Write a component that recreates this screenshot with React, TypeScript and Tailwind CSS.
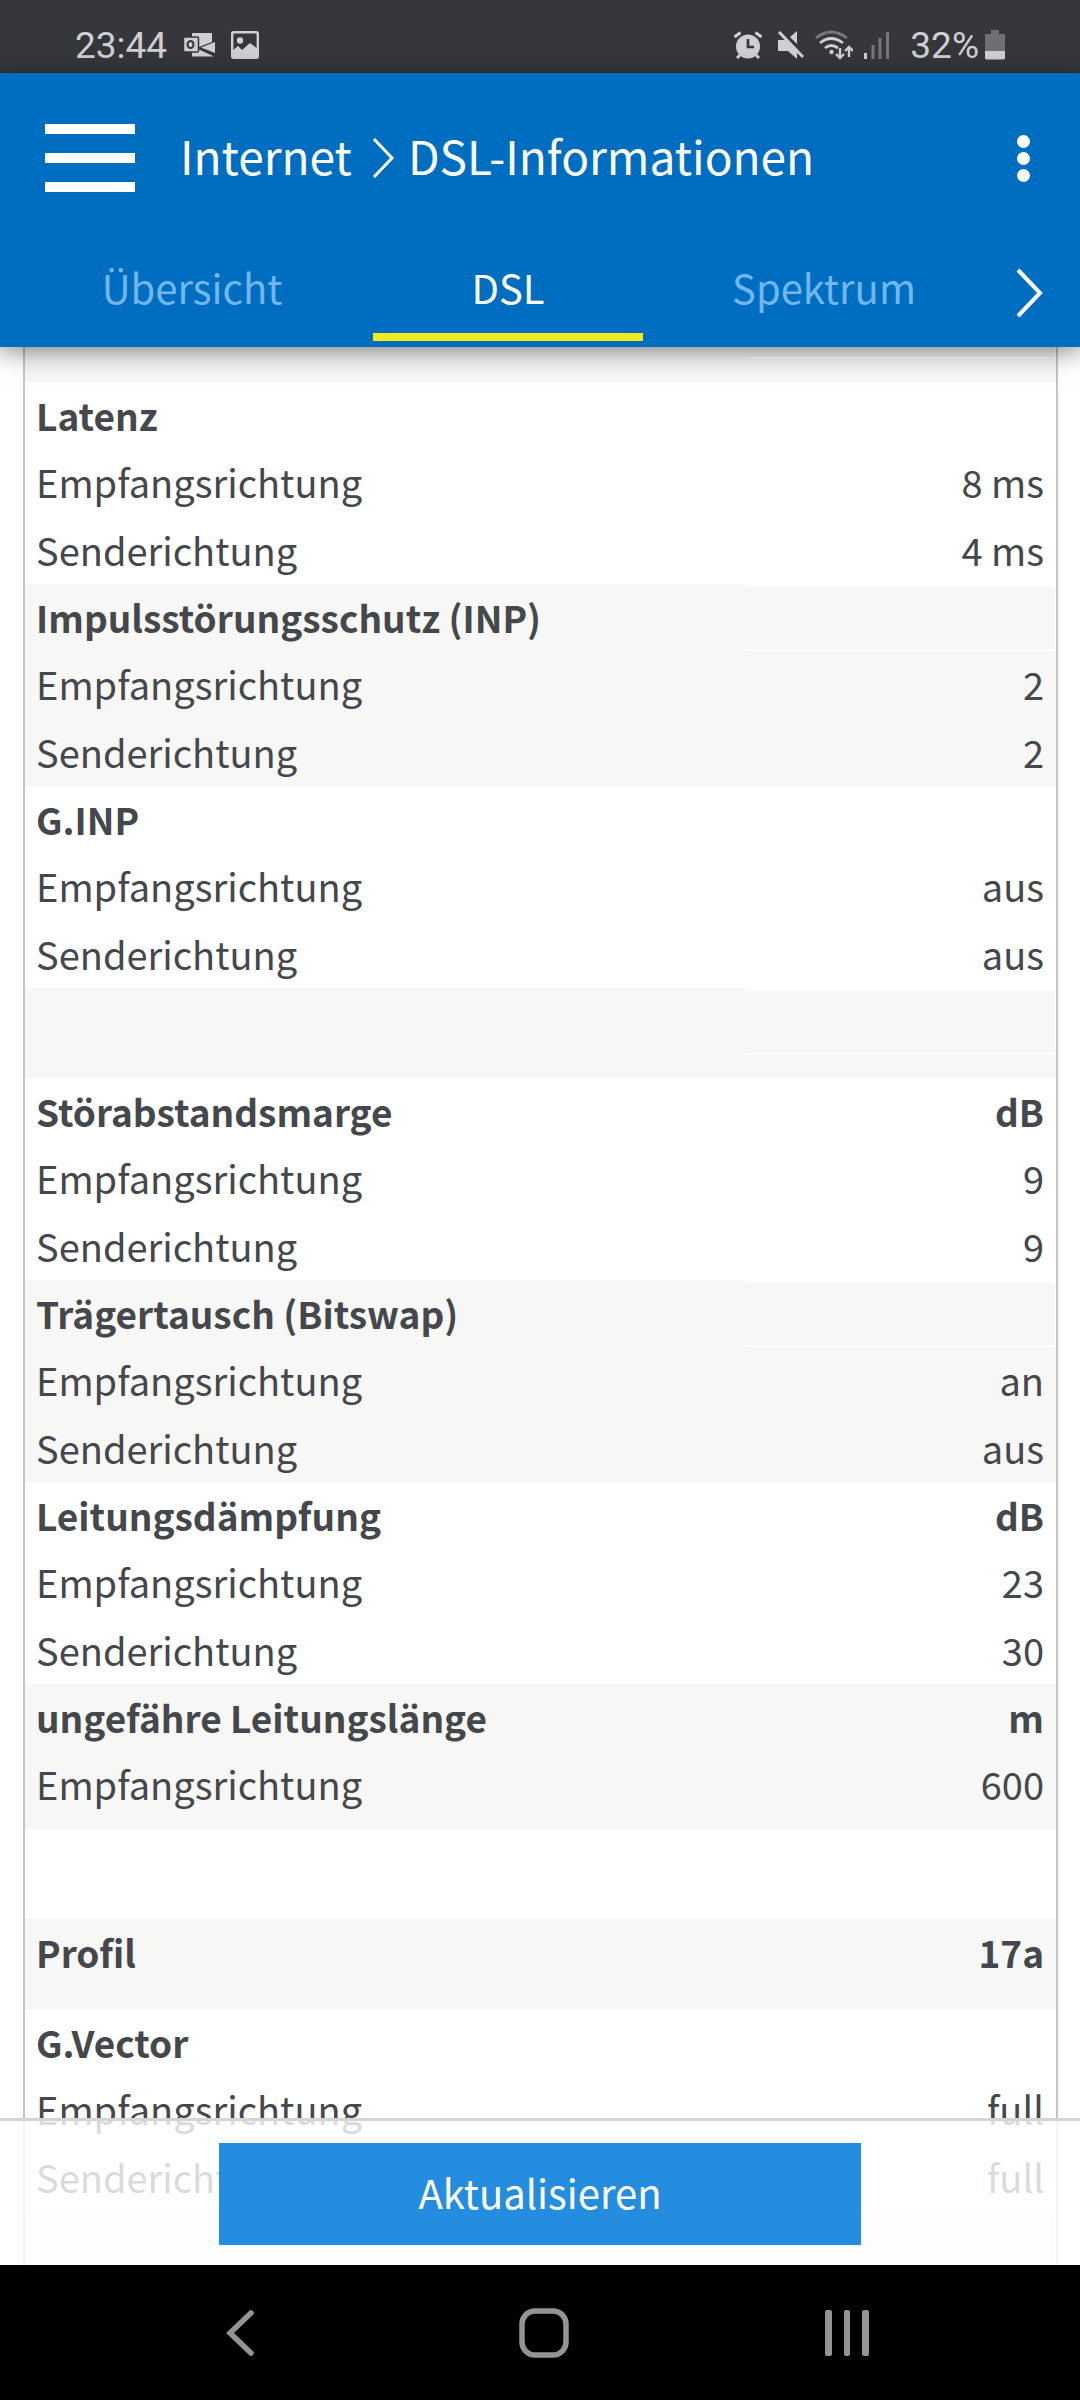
import clsx from 'clsx';

type Row = {
    label: string;
    value?: string;
    bold?: boolean;
};

const groups: Row[][] = [
    [{ label: '' }],
    [
        { label: 'Latenz', bold: true },
        { label: 'Empfangsrichtung', value: '8 ms' },
        { label: 'Senderichtung', value: '4 ms' },
    ],
    [
        { label: 'Impulsstörungsschutz (INP)', bold: true },
        { label: 'Empfangsrichtung', value: '2' },
        { label: 'Senderichtung', value: '2' },
    ],
    [
        { label: 'G.INP', bold: true },
        { label: 'Empfangsrichtung', value: 'aus' },
        { label: 'Senderichtung', value: 'aus' },
    ],
    [{ label: '' }],
    [
        { label: 'Störabstandsmarge', value: 'dB', bold: true },
        { label: 'Empfangsrichtung', value: '9' },
        { label: 'Senderichtung', value: '9' },
    ],
    [
        { label: 'Trägertausch (Bitswap)', bold: true },
        { label: 'Empfangsrichtung', value: 'an' },
        { label: 'Senderichtung', value: 'aus' },
    ],
    [
        { label: 'Leitungsdämpfung', value: 'dB', bold: true },
        { label: 'Empfangsrichtung', value: '23' },
        { label: 'Senderichtung', value: '30' },
    ],
    [
        { label: 'ungefähre Leitungslänge', value: 'm', bold: true },
        { label: 'Empfangsrichtung', value: '600' },
    ],
    [{ label: '' }],
    [{ label: 'Profil', value: '17a', bold: true }],
    [
        { label: 'G.Vector', bold: true },
        { label: 'Empfangsrichtung', value: 'full' },
        { label: 'Senderichtung', value: 'full' },
    ],
    [{ label: '' }],
];

const tabs = [
    { name: 'Übersicht', active: false },
    { name: 'DSL', active: true },
    { name: 'Spektrum', active: false },
];

function rowHeight(count: number, index: number) {
    if (count === 1) return 'h-[90px]';
    if (count === 2 && index === 1) return 'h-[78px]';
    if (index === 1) return 'h-[68px]';
    return 'h-[67px]';
}

function StatusBar() {
    return (
        <div className="flex h-[73px] shrink-0 items-center justify-between bg-[#36373b] px-[75px] pt-[17px] font-['Roboto',sans-serif] text-[37px] leading-none text-[#d0d0d2]">
            <div className="flex items-center">
                <span className="mr-4">23:44</span>
                <svg width="32" height="26" viewBox="0 0 32 26" className="mr-4" fill="currentColor">
                    <path d="M9 1h20v9l-13 5-7-2z" />
                    <path d="M32 10v11l-14-5.500z" />
                    <path d="M9 17h6l16 7.500H9z" />
                    <rect x="0.500" y="5" width="15" height="15" rx="1" stroke="#36373b" strokeWidth="1.500" />
                    <ellipse cx="7.500" cy="12.500" rx="3" ry="3.500" fill="none" stroke="#36373b" strokeWidth="2" />
                </svg>
                <svg width="28" height="28" viewBox="0 0 28 28">
                    <rect x="1.200" y="1.200" width="25.600" height="25.600" rx="1.500" fill="none" stroke="currentColor" strokeWidth="2.400" />
                    <circle cx="9" cy="9.500" r="3.200" fill="currentColor" />
                    <path d="M1 20l6-5 4 4 8-7 8 6v9H1z" fill="currentColor" />
                </svg>
            </div>
            <div className="flex items-center">
                <svg width="30" height="28" viewBox="0 0 30 28" className="mr-[14px]">
                    <circle cx="15" cy="15.500" r="12" fill="currentColor" />
                    <path d="M1.500 6l6-4.500M28.500 6l-6-4.500M4 27l4-4M26 27l-4-4" stroke="currentColor" strokeWidth="3" />
                    <path d="M15 8v8h6" fill="none" stroke="#36373b" strokeWidth="2.600" />
                </svg>
                <svg width="28" height="28" viewBox="0 0 28 28" className="mr-[10px]">
                    <path d="M1 9h7l12 12v7l-9-8H1z" fill="currentColor" />
                    <path d="M20 0v13l-7-7z" fill="currentColor" />
                    <path d="M2 1l24 25" stroke="currentColor" strokeWidth="3" />
                </svg>
                <svg width="38" height="30" viewBox="0 0 38 30" fill="none" stroke="currentColor" strokeWidth="2.800" className="mr-[11px]">
                    <path d="M1 8q15-12 31 0" stroke="#77787b" />
                    <path d="M5 13q11-9 23 0M10 18q6-5 13 0" />
                    <circle cx="16.500" cy="22" r="2.200" fill="currentColor" stroke="none" />
                    <path d="M25 18v9m-4-3l4 4 4-4M34 27v-9m-4 3l4-4 4 4" strokeWidth="2.400" />
                </svg>
                <svg width="26" height="28" viewBox="0 0 26 28" className="mr-5">
                    <path d="M1.500 22v6" stroke="currentColor" strokeWidth="3" />
                    <path d="M9 14v14M16 7v21M23.500 1v27" stroke="#77787b" strokeWidth="3" />
                </svg>
                <span className="mr-[6px]">32%</span>
                <svg width="20" height="30" viewBox="0 0 20 30">
                    <path d="M6 0h8v4h6v17H0V4h6z" fill="#6f7073" />
                    <path d="M0 21h20v7q0 1.500-1.500 1.500h-17Q0 29.500 0 28z" fill="currentColor" />
                </svg>
            </div>
        </div>
    )
}

function Header() {
    return (
        <header className="relative z-10 flex h-[274px] shrink-0 flex-col bg-[#006ec0] text-white shadow-[0_4px_24px_rgba(0,0,0,0.5)]">
            <div className="flex h-[170px] items-center pr-[50px] pl-[45px]">
                <button type="button" aria-label="Menü" className="flex w-[90px] flex-col gap-[19px]">
                    <span className="h-[10px] bg-white" />
                    <span className="h-[10px] bg-white" />
                    <span className="h-[10px] bg-white" />
                </button>
                <h1 className="ml-[45px] flex items-center text-[46px] leading-none whitespace-nowrap">
                    <a href="#internet" className="pb-[6px]">Internet</a>
                    <svg width="22" height="42" viewBox="0 0 22 42" className="mr-[14px] ml-5" fill="none" stroke="currentColor" strokeWidth="3">
                        <path d="M2 2l18 19L2 40" />
                    </svg>
                    <span className="pb-[6px]">DSL-Informationen</span>
                </h1>
                <button type="button" aria-label="Mehr" className="ml-auto flex flex-col gap-1">
                    <span className="size-[13px] rounded-full bg-white" />
                    <span className="size-[13px] rounded-full bg-white" />
                    <span className="size-[13px] rounded-full bg-white" />
                </button>
            </div>
            <nav className="flex flex-1 items-end gap-[46px] pr-9 pb-[6px] pl-[57px] text-[40px]">
                {tabs.map((tab) => (
                    <a
                        key={tab.name}
                        href="#tab"
                        className={clsx(
                            'w-[270px] border-b-8 pb-4 text-center leading-[60px]',
                            tab.active ? 'border-[#f3ea1d] text-white' : 'border-transparent text-[#72b6ee]'
                        )}
                    >
                        {tab.name}
                    </a>
                ))}
                <button type="button" aria-label="Weitere Tabs" className="mb-[23px] ml-auto">
                    <svg width="28" height="50" viewBox="0 0 28 50" fill="none" stroke="currentColor" strokeWidth="4">
                        <path d="M2 2l22 23L2 48" />
                    </svg>
                </button>
            </nav>
        </header>
    )
}

function DslTable() {
    return (
        <div className="-mt-[55px] mr-[22px] ml-[23px] border-x-2 border-[#c3c4c4]">
            <table className="w-full table-fixed border-separate border-spacing-0 leading-[60px] text-[#44474b]">
                <colgroup>
                    <col />
                    <col className="w-[310px]" />
                </colgroup>
                {groups.map((group, i) => (
                    <tbody key={i} className={i % 2 === 0 ? 'bg-[#f7f7f6]' : 'bg-white'}>
                        {group.map((row, j) => (
                            <tr
                                key={j}
                                className={clsx(
                                    'align-top',
                                    rowHeight(group.length, j),
                                    row.bold ? 'text-[37px] font-bold' : 'text-[38px]'
                                )}
                            >
                                <td className="px-[11px] pt-[3px] whitespace-nowrap">{row.label}</td>
                                {row.value ? (
                                    <td className="px-3 pt-[3px] text-right">{row.value}</td>
                                ) : (
                                    <td className="p-0">
                                        <div className="h-[67px] border-t-3 border-r border-b-2 border-white" />
                                    </td>
                                )}
                            </tr>
                        ))}
                    </tbody>
                ))}
            </table>
        </div>
    )
}

function SystemNav() {
    return (
        <div className="grid h-[135px] shrink-0 grid-cols-3 items-center justify-items-center bg-black pr-[82px] pl-[90px] text-[#949494]">
            <button type="button" aria-label="Zurück">
                <svg width="30" height="46" viewBox="0 0 30 46" fill="none" stroke="currentColor" strokeWidth="5.500" strokeLinecap="round">
                    <path d="M25 3L4 23l21 20" />
                </svg>
            </button>
            <button type="button" aria-label="Startseite">
                <svg width="50" height="50" viewBox="0 0 50 50" fill="none" stroke="currentColor" strokeWidth="5.500">
                    <rect x="3" y="3" width="44" height="44" rx="13" />
                </svg>
            </button>
            <button type="button" aria-label="Letzte Apps">
                <svg width="44" height="46" viewBox="0 0 44 46" fill="currentColor">
                    <rect x="0" width="7" height="46" rx="2" />
                    <rect x="19" width="6" height="46" rx="2" />
                    <rect x="37" width="7" height="46" rx="2" />
                </svg>
            </button>
        </div>
    )
}

export default function App() {
    return (
        <div className="flex h-screen flex-col overflow-hidden bg-white font-['Noto_Sans_CJK_SC',sans-serif]">
            <StatusBar />
            <Header />
            <main className="relative min-h-0 flex-1 overflow-hidden">
                <DslTable />
                <div className="absolute inset-x-0 bottom-0 border-t-3 border-[#d4d4d4] bg-white/80 bg-clip-padding px-[219px] pt-[22px] pb-5">
                    <button type="button" className="h-[102px] w-full bg-[#258ddf] pb-1 text-[40px] text-white">
                        Aktualisieren
                    </button>
                </div>
            </main>
            <SystemNav />
        </div>
    )
}
